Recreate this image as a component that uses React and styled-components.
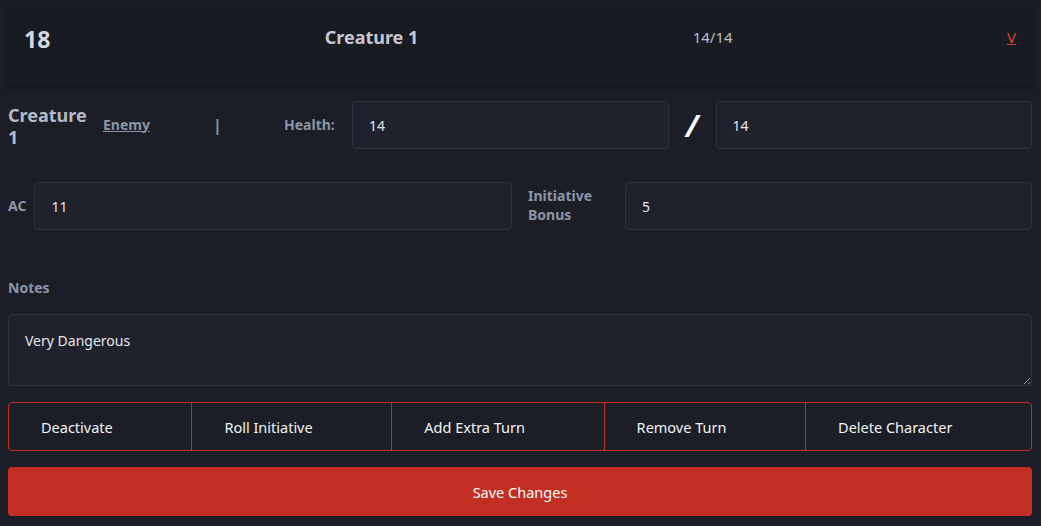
import React from "react";
import styled, { createGlobalStyle } from "styled-components";

const GlobalStyle = createGlobalStyle`
  body {
    margin: 0;
    background: #1b1e26;
    font-family: "Noto Sans", "Open Sans", sans-serif;
  }
  * { box-sizing: border-box; }
`;

const Page = styled.div`
  padding: 3px 9px 0 8px;
  display: flex;
  flex-direction: column;
`;

const HeaderCard = styled.div`
  height: 82px;
  background: #181b22;
  box-shadow: 0 2px 6px rgba(0, 0, 0, 0.35);
  display: flex;
  justify-content: space-between;
  align-items: center;
  padding: 0 16px 14px 16px;
  color: #c8ccd6;
`;

const Order = styled.div`
  font-size: 23px;
  font-weight: 700;
  color: #d3d7df;
  margin-top: 4px;
`;

const HeaderName = styled.div`
  font-size: 18px;
  font-weight: 700;
  color: #c3c8d2;
`;

const HeaderHp = styled.div`
  font-size: 15px;
  color: #b9bfca;
`;

const Toggle = styled.a`
  font-size: 15px;
  color: #d9432f;
  text-decoration: underline;
  cursor: pointer;
`;

const HealthRow = styled.div`
  display: grid;
  grid-template-columns: 95px 110px 71px 68px 1fr 47px 1fr;
  align-items: center;
  margin-top: 16px;
  height: 48px;
`;

const Name = styled.div`
  font-size: 18px;
  font-weight: 700;
  color: #b4bbc8;
  line-height: 1.2;
  width: 82px;
  margin-top: 3px;
`;

const Label = styled.span`
  font-size: 14px;
  font-weight: 700;
  color: #8c95a8;
  line-height: 1.35;
  text-decoration: ${p => (p.underline ? "underline" : "none")};
`;

const Pipe = styled.span`
  font-size: 16px;
  font-weight: 700;
  color: #8c95a8;
`;

const Slash = styled.span`
  justify-self: center;
  font-size: 30px;
  font-weight: 700;
  font-style: italic;
  color: #ffffff;
`;

const Input = styled.input`
  height: 48px;
  width: 100%;
  min-width: 0;
  background: #1f222c;
  border: 1px solid #2e3240;
  border-radius: 4px;
  padding: 0 16px;
  font-family: inherit;
  font-size: 14px;
  color: #e4e7ee;
  outline: none;
`;

const StatsRow = styled.div`
  display: grid;
  grid-template-columns: 1fr 1fr;
  gap: 16px;
  margin-top: 33px;
`;

const Field = styled.div`
  display: flex;
  align-items: center;
`;

const FieldLabel = styled(Label)`
  flex: 0 0 ${p => p.w}px;
  padding-right: 8px;
`;

const NotesLabel = styled(Label)`
  margin-top: 49px;
  height: 20px;
`;

const Notes = styled.textarea`
  margin-top: 15px;
  height: 72px;
  resize: vertical;
  background: #1f222c;
  border: 1px solid #2e3240;
  border-radius: 4px;
  padding: 16px 16px;
  font-family: inherit;
  font-size: 14px;
  color: #e4e7ee;
  outline: none;
`;

const ActionBar = styled.div`
  display: flex;
  margin-top: 16px;
  height: 49px;
  border: 1px solid #c42d22;
  border-radius: 4px;
  overflow: hidden;
`;

const Action = styled.button`
  flex: 1 1 auto;
  background: transparent;
  border: none;
  border-left: ${p => (p.first ? "none" : "1px solid #c42d22")};
  padding: 0 32px;
  text-align: left;
  font-family: inherit;
  font-size: 14.5px;
  color: #f2f3f6;
  white-space: nowrap;
  cursor: pointer;
`;

const SaveButton = styled.button`
  margin-top: 16px;
  height: 49px;
  background: #c42e22;
  border: none;
  border-radius: 4px;
  font-family: inherit;
  font-size: 14.5px;
  color: #ffffff;
  cursor: pointer;
`;

const actions = ["Deactivate", "Roll Initiative", "Add Extra Turn", "Remove Turn", "Delete Character"];

export default function App() {
  return (
    <>
      <GlobalStyle />
      <Page>
        <HeaderCard>
          <Order>18</Order>
          <HeaderName>Creature 1</HeaderName>
          <HeaderHp>14/14</HeaderHp>
          <Toggle>V</Toggle>
        </HeaderCard>

        <HealthRow>
          <Name>Creature 1</Name>
          <Label underline>Enemy</Label>
          <Pipe>|</Pipe>
          <Label>Health:</Label>
          <Input defaultValue="14" />
          <Slash>/</Slash>
          <Input defaultValue="14" />
        </HealthRow>

        <StatsRow>
          <Field>
            <FieldLabel w={26}>AC</FieldLabel>
            <Input defaultValue="11" />
          </Field>
          <Field>
            <FieldLabel w={97}>Initiative Bonus</FieldLabel>
            <Input defaultValue="5" />
          </Field>
        </StatsRow>

        <NotesLabel>Notes</NotesLabel>
        <Notes defaultValue="Very Dangerous" />

        <ActionBar>
          {actions.map((a, i) => (
            <Action key={a} first={i === 0}>{a}</Action>
          ))}
        </ActionBar>
        <SaveButton>Save Changes</SaveButton>
      </Page>
    </>
  );
}
